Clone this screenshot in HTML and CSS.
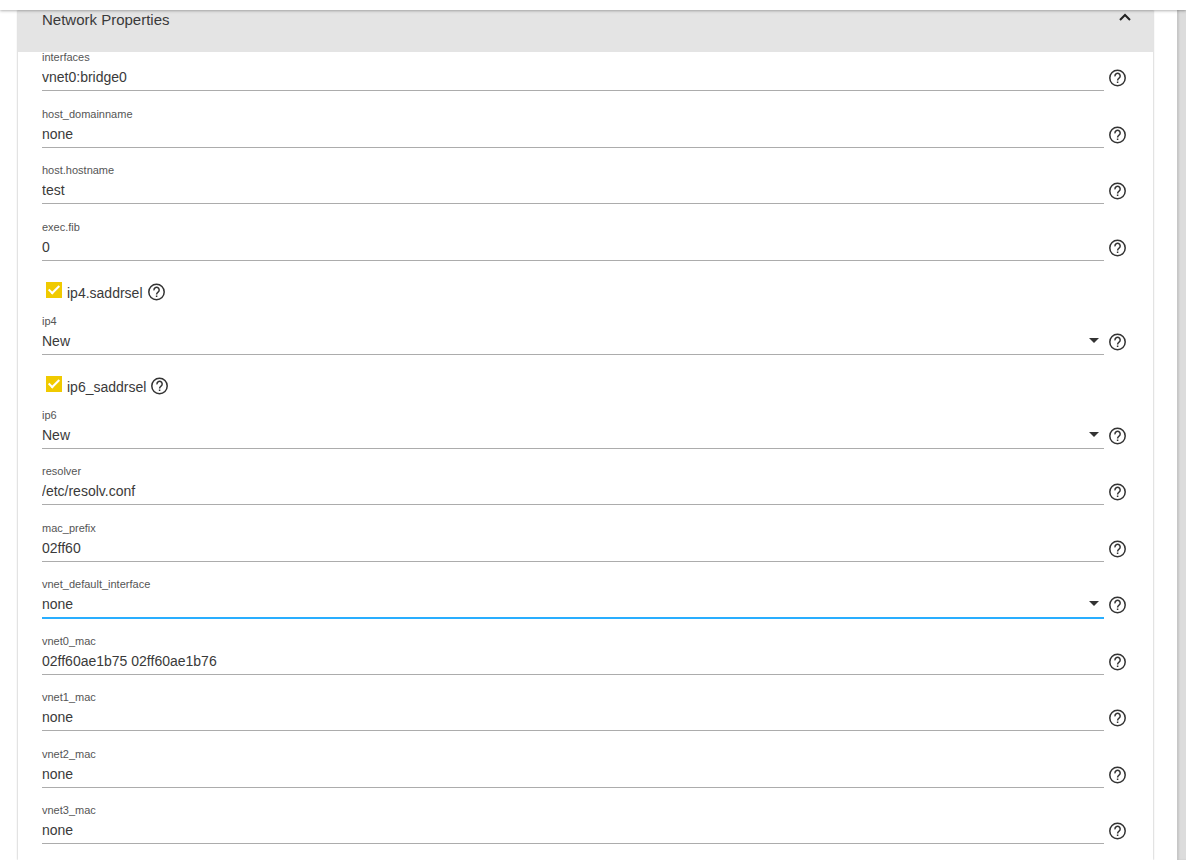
FILE: index.html
```html
<!DOCTYPE html>
<html lang="en">

<head>
    <meta charset="UTF-8">
    <meta name="viewport" content="width=device-width, initial-scale=1.0">
    <title>Network Properties</title>
    <link rel="stylesheet" href="styles.css">
</head>

<body>
    <!-- shared icons -->
    <svg class="sprite" aria-hidden="true">
        <symbol id="help" viewBox="0 0 20 20">
            <circle cx="9.5" cy="10" r="7.7" />
            <path d="M7 8.3a2.6 2.6 0 1 1 4.2 1.7c-1 .8-1.6 1.2-1.6 2.4M9.6 13.4v1.5" />
        </symbol>
    </svg>

    <div class="topbar"></div>
    <div class="page">
        <main class="content">
            <section class="panel">
                <header class="panel-header">
                    <h1>Network Properties</h1>
                    <button type="button" class="toggle" aria-label="Collapse">
                        <svg viewBox="0 0 12 8">
                            <path d="M1 7l5-5 5 5" />
                        </svg>
                    </button>
                </header>

                <form class="fields">
                    <div class="field">
                        <label for="interfaces">interfaces</label>
                        <input type="text" id="interfaces" value="vnet0:bridge0">
                        <button type="button" class="help" aria-label="Help"><svg><use href="#help" /></svg></button>
                    </div>
                    <div class="field">
                        <label for="host-domainname">host_domainname</label>
                        <input type="text" id="host-domainname" value="none">
                        <button type="button" class="help" aria-label="Help"><svg><use href="#help" /></svg></button>
                    </div>
                    <div class="field">
                        <label for="host-hostname">host.hostname</label>
                        <input type="text" id="host-hostname" value="test">
                        <button type="button" class="help" aria-label="Help"><svg><use href="#help" /></svg></button>
                    </div>
                    <div class="field">
                        <label for="exec-fib">exec.fib</label>
                        <input type="text" id="exec-fib" value="0">
                        <button type="button" class="help" aria-label="Help"><svg><use href="#help" /></svg></button>
                    </div>

                    <div class="check">
                        <input type="checkbox" id="ip4-saddrsel" checked>
                        <label for="ip4-saddrsel">ip4.saddrsel</label>
                        <button type="button" class="help" aria-label="Help"><svg><use href="#help" /></svg></button>
                    </div>
                    <div class="field">
                        <label for="ip4">ip4</label>
                        <div class="select">
                            <select id="ip4">
                                <option>New</option>
                            </select>
                        </div>
                        <button type="button" class="help" aria-label="Help"><svg><use href="#help" /></svg></button>
                    </div>

                    <div class="check">
                        <input type="checkbox" id="ip6-saddrsel" checked>
                        <label for="ip6-saddrsel">ip6_saddrsel</label>
                        <button type="button" class="help" aria-label="Help"><svg><use href="#help" /></svg></button>
                    </div>
                    <div class="field">
                        <label for="ip6">ip6</label>
                        <div class="select">
                            <select id="ip6">
                                <option>New</option>
                            </select>
                        </div>
                        <button type="button" class="help" aria-label="Help"><svg><use href="#help" /></svg></button>
                    </div>

                    <div class="field">
                        <label for="resolver">resolver</label>
                        <input type="text" id="resolver" value="/etc/resolv.conf">
                        <button type="button" class="help" aria-label="Help"><svg><use href="#help" /></svg></button>
                    </div>
                    <div class="field">
                        <label for="mac-prefix">mac_prefix</label>
                        <input type="text" id="mac-prefix" value="02ff60">
                        <button type="button" class="help" aria-label="Help"><svg><use href="#help" /></svg></button>
                    </div>
                    <div class="field active">
                        <label for="vnet-default">vnet_default_interface</label>
                        <div class="select">
                            <select id="vnet-default">
                                <option>none</option>
                            </select>
                        </div>
                        <button type="button" class="help" aria-label="Help"><svg><use href="#help" /></svg></button>
                    </div>
                    <div class="field">
                        <label for="vnet0-mac">vnet0_mac</label>
                        <input type="text" id="vnet0-mac" value="02ff60ae1b75 02ff60ae1b76">
                        <button type="button" class="help" aria-label="Help"><svg><use href="#help" /></svg></button>
                    </div>
                    <div class="field">
                        <label for="vnet1-mac">vnet1_mac</label>
                        <input type="text" id="vnet1-mac" value="none">
                        <button type="button" class="help" aria-label="Help"><svg><use href="#help" /></svg></button>
                    </div>
                    <div class="field">
                        <label for="vnet2-mac">vnet2_mac</label>
                        <input type="text" id="vnet2-mac" value="none">
                        <button type="button" class="help" aria-label="Help"><svg><use href="#help" /></svg></button>
                    </div>
                    <div class="field">
                        <label for="vnet3-mac">vnet3_mac</label>
                        <input type="text" id="vnet3-mac" value="none">
                        <button type="button" class="help" aria-label="Help"><svg><use href="#help" /></svg></button>
                    </div>
                </form>
            </section>
        </main>
        <div class="gutter"></div>
    </div>
</body>

</html>
```
FILE: styles.css
```css
*,
*::before {
    margin: 0;
    padding: 0;
    box-sizing: border-box;
}

body {
    min-height: 100vh;
    display: flex;
    flex-direction: column;
    background: #fff;
    color: #3a3a3a;
    font-family: "Liberation Sans", Arial, sans-serif;
    font-size: 14px;
}

button {
    border: none;
    background: none;
    color: inherit;
    cursor: pointer;
}

.sprite {
    display: none;
}

.topbar {
    position: relative;
    z-index: 1;
    height: 10px;
    background: #fff;
    box-shadow: 0 1px 3px rgba(0, 0, 0, 0.3);
}

.page {
    flex: 1;
    display: flex;
}

.content {
    flex: 1;
    display: flex;
    padding: 0 24px 0 18px;
}

.gutter {
    width: 9px;
    background: #dcdcdc;
    box-shadow: inset 2px 0 2px rgba(0, 0, 0, 0.1);
}

.panel {
    flex: 1;
    background: #fff;
    box-shadow: 0 0 2px rgba(0, 0, 0, 0.35);
}

.panel-header {
    display: flex;
    justify-content: space-between;
    align-items: flex-start;
    height: 42px;
    padding: 0 22px 0 24px;
    background: #e4e4e4;
}

.panel-header h1 {
    font-size: 15px;
    font-weight: normal;
    line-height: 20px;
}

.toggle {
    height: 14px;
}

.toggle svg {
    display: block;
    width: 12px;
    height: 14px;
    fill: none;
    stroke: #222;
    stroke-width: 2;
}

.fields {
    padding: 0 25px 0 24px;
}

.field {
    display: grid;
    grid-template-columns: 1fr 20px;
    grid-template-rows: 12px 27px;
    column-gap: 4px;
    padding-top: 18px;
}

.field:nth-child(odd) {
    padding-top: 17px;
}

.field:first-child,
.check + .field {
    padding-top: 0;
}

.field label {
    grid-column: 1 / -1;
    font-size: 11px;
    line-height: 10px;
    color: #555;
}

.field input,
.field select {
    display: block;
    width: 100%;
    height: 27px;
    border: none;
    border-bottom: 1px solid #acacac;
    border-radius: 0;
    background: none;
    color: inherit;
    font: inherit;
    outline: none;
    appearance: none;
}

.select {
    position: relative;
}

.select::after {
    content: "";
    position: absolute;
    top: 10px;
    right: 5px;
    border: 5px solid transparent;
    border-top-color: #333;
    border-bottom: none;
    pointer-events: none;
}

.active select {
    height: 28px;
    border-bottom: 2px solid #29aeff;
}

.help,
.help svg {
    display: block;
    width: 20px;
    height: 20px;
    fill: none;
    stroke: #333;
    stroke-width: 1.5;
}

.field .help {
    margin-top: 4px;
}

/* check boxes */
.check {
    display: flex;
    align-items: flex-start;
    height: 55px;
    padding: 21px 0 0 4px;
}

.check input {
    display: flex;
    justify-content: center;
    width: 16px;
    height: 16px;
    padding-top: 1px;
    background: #f0ca00;
    appearance: none;
}

.check input:checked::before {
    content: "";
    width: 6px;
    height: 11px;
    border: solid #fff;
    border-width: 0 2px 2px 0;
    transform: rotate(45deg);
}

.check label {
    margin: 0 4px 0 5px;
    line-height: 22px;
}
```
